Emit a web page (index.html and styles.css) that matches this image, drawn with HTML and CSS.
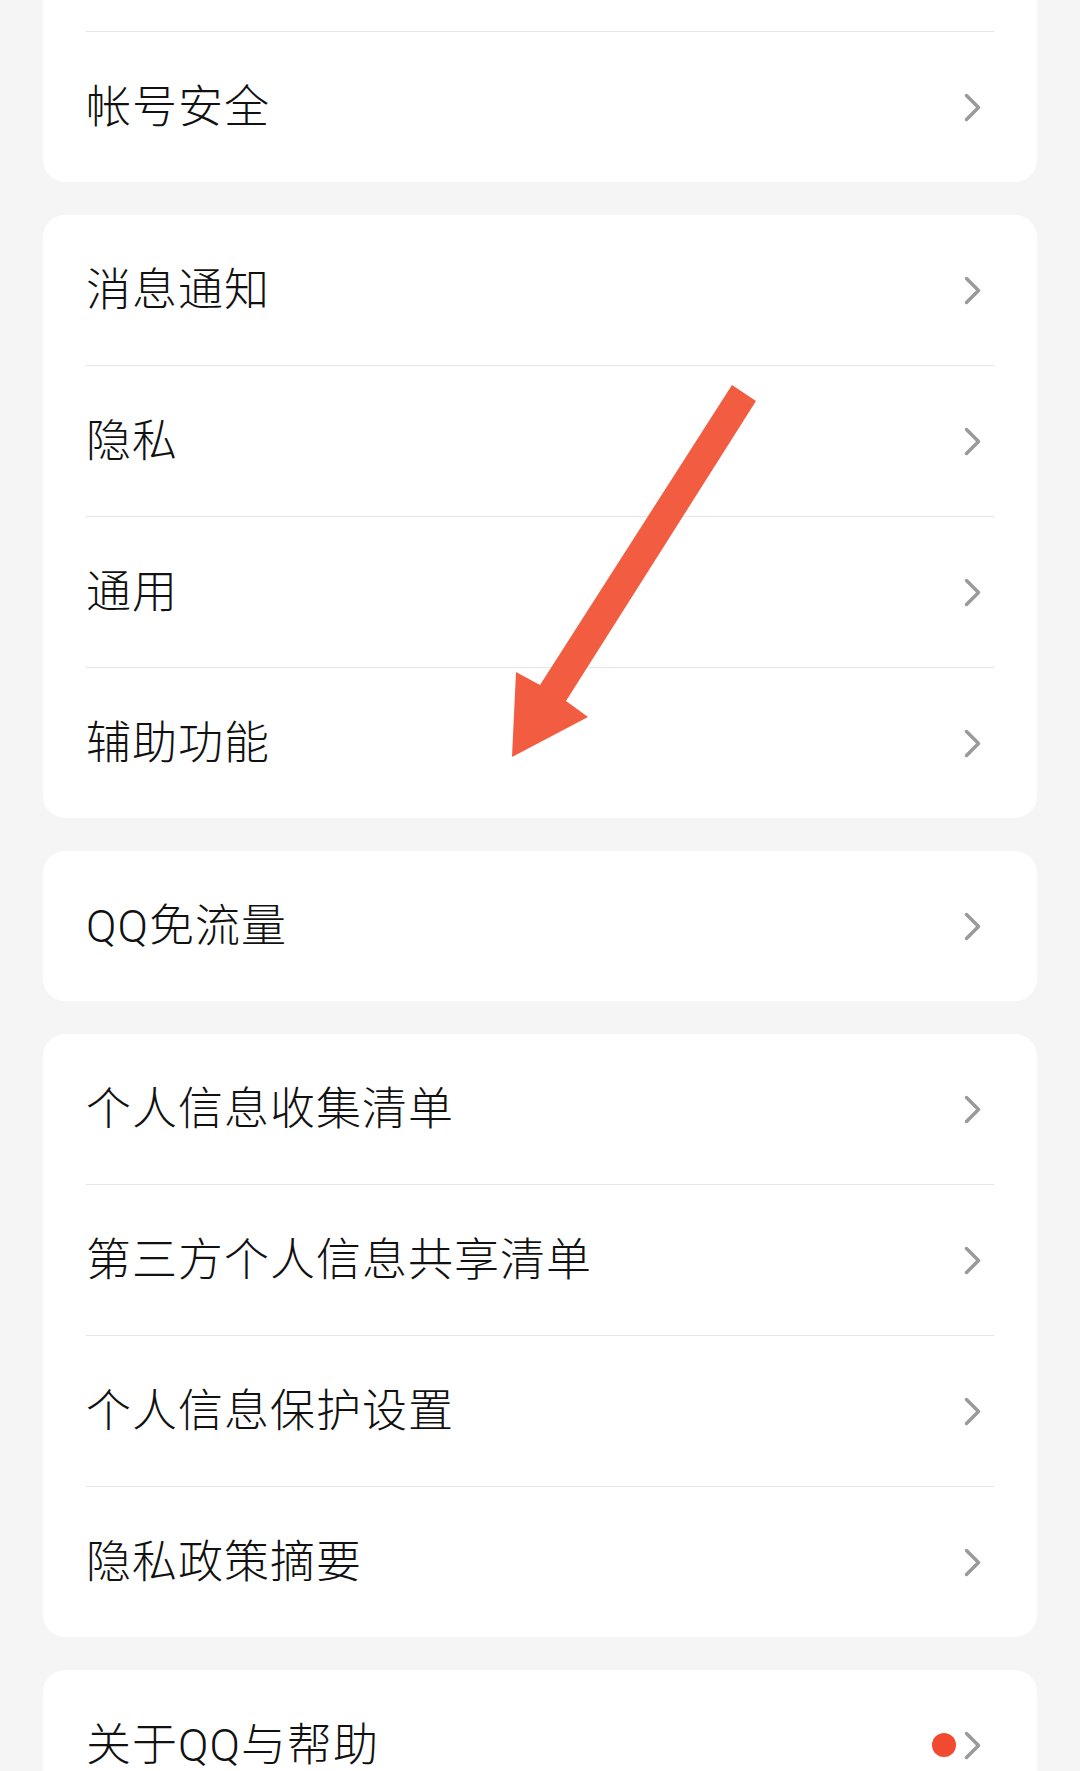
FILE: index.html
```html
<!DOCTYPE html>
<html lang="zh-CN">
<head>
<meta charset="utf-8">
<title>设置</title>
<link rel="stylesheet" href="styles.css">
</head>
<body>
<div class="screen">
  <div class="list">
    <div class="card first">
      <div class="row"></div>
      <div class="row"><span class="label">帐号安全</span><span class="right"><svg class="chev" viewBox="0 0 17 29"><polyline points="2.5,2.5 14.5,14.5 2.5,26.5"/></svg></span></div>
    </div>
    <div class="card">
      <div class="row"><span class="label">消息通知</span><span class="right"><svg class="chev" viewBox="0 0 17 29"><polyline points="2.5,2.5 14.5,14.5 2.5,26.5"/></svg></span></div>
      <div class="row"><span class="label">隐私</span><span class="right"><svg class="chev" viewBox="0 0 17 29"><polyline points="2.5,2.5 14.5,14.5 2.5,26.5"/></svg></span></div>
      <div class="row"><span class="label">通用</span><span class="right"><svg class="chev" viewBox="0 0 17 29"><polyline points="2.5,2.5 14.5,14.5 2.5,26.5"/></svg></span></div>
      <div class="row"><span class="label">辅助功能</span><span class="right"><svg class="chev" viewBox="0 0 17 29"><polyline points="2.5,2.5 14.5,14.5 2.5,26.5"/></svg></span></div>
    </div>
    <div class="card">
      <div class="row"><span class="label">QQ免流量</span><span class="right"><svg class="chev" viewBox="0 0 17 29"><polyline points="2.5,2.5 14.5,14.5 2.5,26.5"/></svg></span></div>
    </div>
    <div class="card">
      <div class="row"><span class="label">个人信息收集清单</span><span class="right"><svg class="chev" viewBox="0 0 17 29"><polyline points="2.5,2.5 14.5,14.5 2.5,26.5"/></svg></span></div>
      <div class="row"><span class="label">第三方个人信息共享清单</span><span class="right"><svg class="chev" viewBox="0 0 17 29"><polyline points="2.5,2.5 14.5,14.5 2.5,26.5"/></svg></span></div>
      <div class="row"><span class="label">个人信息保护设置</span><span class="right"><svg class="chev" viewBox="0 0 17 29"><polyline points="2.5,2.5 14.5,14.5 2.5,26.5"/></svg></span></div>
      <div class="row"><span class="label">隐私政策摘要</span><span class="right"><svg class="chev" viewBox="0 0 17 29"><polyline points="2.5,2.5 14.5,14.5 2.5,26.5"/></svg></span></div>
    </div>
    <div class="card">
      <div class="row"><span class="label">关于QQ与帮助</span><span class="right"><span class="dot"></span><svg class="chev" viewBox="0 0 17 29"><polyline points="2.5,2.5 14.5,14.5 2.5,26.5"/></svg></span></div>
    </div>
  </div>
  <svg class="arrow" viewBox="0 0 1080 1771" width="1080" height="1771">
    <polygon points="732,385 756,401 566,701 588,717 512,757 516,672 540,685"/>
  </svg>
</div>
</body>
</html>
```

FILE: styles.css
```css
html, body {
  margin: 0;
  padding: 0;
  background: #f5f5f5;
}

.screen {
  position: relative;
  width: 1080px;
  height: 1771px;
  overflow: hidden;
  background: #f5f5f5;
  font-family: Roboto, "Noto Sans CJK SC", "Noto Sans", sans-serif;
}

.list {
  display: flex;
  flex-direction: column;
  gap: 33px;
  padding: 0 43px;
}

.card {
  background: #ffffff;
  border-radius: 22px;
}

.card.first {
  margin-top: -119px;
}

.row {
  height: 150px;
  margin: 0 43px;
  display: flex;
  align-items: center;
  justify-content: space-between;
  border-bottom: 1px solid #e6e6e6;
}

.row:last-child {
  border-bottom: none;
}

.label {
  font-size: 45px;
  line-height: 60px;
  letter-spacing: 1px;
  color: #111111;
  font-weight: 300;
  margin-top: 2px;
}

.right {
  display: flex;
  align-items: center;
  margin-right: 13px;
}

.chev {
  width: 17px;
  height: 29px;
  display: block;
}

.chev polyline {
  fill: none;
  stroke: #9a9a9a;
  stroke-width: 3.5;
  stroke-linecap: round;
  stroke-linejoin: round;
}

.dot {
  width: 24px;
  height: 24px;
  border-radius: 50%;
  background: #f24a30;
  margin-right: 8px;
}

.arrow {
  position: absolute;
  top: 0;
  left: 0;
  pointer-events: none;
}

.arrow polygon {
  fill: #f25c40;
}
```
